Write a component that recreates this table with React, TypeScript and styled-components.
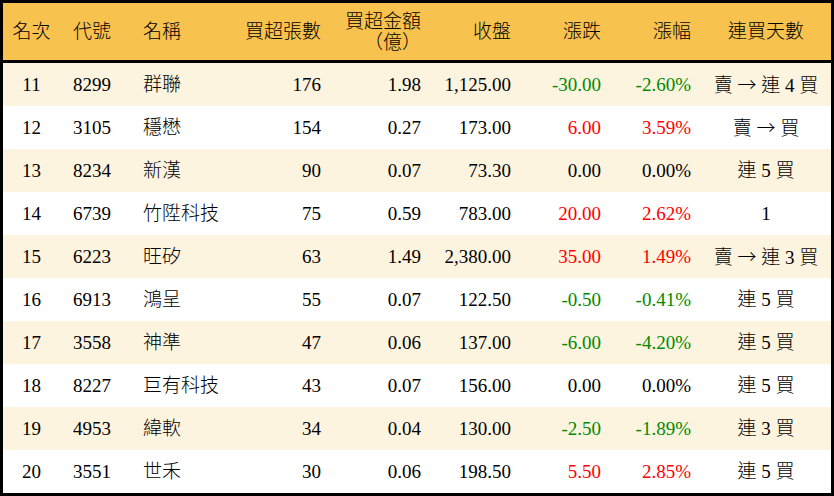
import React from 'react';
import styled, { createGlobalStyle } from 'styled-components';

const GlobalStyle = createGlobalStyle`
    html, body {
        margin: 0;
        padding: 0;
        background: #FFFFFF;
    }
`;

const COLUMNS = '57px 73px 98px 100px 100px 90px 90px 90px 130px';

const Table = styled.div`
    width: 834px;
    height: 496px;
    box-sizing: border-box;
    border: 3px solid #000000;
    font-family: "Liberation Serif", "Noto Sans CJK TC", serif;
    font-size: 19px;
    font-weight: 300;
    color: #000000;
    display: flex;
    flex-direction: column;
`;

const HeaderRow = styled.div`
    display: grid;
    grid-template-columns: ${COLUMNS};
    height: 57px;
    background: #F8C24F;
    border-bottom: 3px solid #000000;
`;

const Row = styled.div<{ $striped: boolean }>`
    display: grid;
    grid-template-columns: ${COLUMNS};
    height: 43px;
    background: ${props => (props.$striped ? '#FDF4E0' : '#FFFFFF')};
`;

type Align = 'left' | 'right' | 'center';

const Cell = styled.div<{ $align: Align; $color?: string }>`
    display: flex;
    flex-direction: column;
    justify-content: center;
    align-items: ${props =>
        props.$align === 'left' ? 'flex-start' : props.$align === 'right' ? 'flex-end' : 'center'};
    text-align: ${props => props.$align};
    padding: ${props =>
        props.$align === 'left' ? '0 0 0 10px' : props.$align === 'right' ? '0 10px 0 0' : '0'};
    color: ${props => props.$color || '#000000'};
    white-space: nowrap;
    line-height: 21px;
`;

const CodeCell = styled(Cell)`
    padding-left: 13px;
`;

const HeadText = styled.span`
    display: block;
`;

const Arrow = styled.span`
    font-family: "Noto Sans CJK TC", sans-serif;
    font-weight: 300;
`;

const columns: { label: string[]; align: Align }[] = [
    { label: ['名次'], align: 'center' },
    { label: ['代號'], align: 'left' },
    { label: ['名稱'], align: 'left' },
    { label: ['買超張數'], align: 'right' },
    { label: ['買超金額', '（億）'], align: 'right' },
    { label: ['收盤'], align: 'right' },
    { label: ['漲跌'], align: 'right' },
    { label: ['漲幅'], align: 'right' },
    { label: ['連買天數'], align: 'center' },
];

type Stock = {
    rank: number;
    code: string;
    name: string;
    lots: number;
    amount: string;
    close: string;
    change: string;
    pct: string;
    streak: string;
};

const rows: Stock[] = [
    { rank: 11, code: '8299', name: '群聯', lots: 176, amount: '1.98', close: '1,125.00', change: '-30.00', pct: '-2.60%', streak: '賣 → 連 4 買' },
    { rank: 12, code: '3105', name: '穩懋', lots: 154, amount: '0.27', close: '173.00', change: '6.00', pct: '3.59%', streak: '賣 → 買' },
    { rank: 13, code: '8234', name: '新漢', lots: 90, amount: '0.07', close: '73.30', change: '0.00', pct: '0.00%', streak: '連 5 買' },
    { rank: 14, code: '6739', name: '竹陞科技', lots: 75, amount: '0.59', close: '783.00', change: '20.00', pct: '2.62%', streak: '1' },
    { rank: 15, code: '6223', name: '旺矽', lots: 63, amount: '1.49', close: '2,380.00', change: '35.00', pct: '1.49%', streak: '賣 → 連 3 買' },
    { rank: 16, code: '6913', name: '鴻呈', lots: 55, amount: '0.07', close: '122.50', change: '-0.50', pct: '-0.41%', streak: '連 5 買' },
    { rank: 17, code: '3558', name: '神準', lots: 47, amount: '0.06', close: '137.00', change: '-6.00', pct: '-4.20%', streak: '連 5 買' },
    { rank: 18, code: '8227', name: '巨有科技', lots: 43, amount: '0.07', close: '156.00', change: '0.00', pct: '0.00%', streak: '連 5 買' },
    { rank: 19, code: '4953', name: '緯軟', lots: 34, amount: '0.04', close: '130.00', change: '-2.50', pct: '-1.89%', streak: '連 3 買' },
    { rank: 20, code: '3551', name: '世禾', lots: 30, amount: '0.06', close: '198.50', change: '5.50', pct: '2.85%', streak: '連 5 買' },
];

const changeColor = (value: string): string => {
    const n = parseFloat(value);
    if (n > 0) return '#FF0000';
    if (n < 0) return '#008A00';
    return '#000000';
};

// the arrow in the streak text is drawn from the CJK font, like the reference
const renderStreak = (text: string) =>
    text.split('→').map((part, i, all) => (
        <React.Fragment key={i}>
            {part}
            {i < all.length - 1 && <Arrow>→</Arrow>}
        </React.Fragment>
    ));

const App: React.FC = (): React.ReactElement => {
    return (
        <>
            <GlobalStyle />
            <Table>
                <HeaderRow>
                    {columns.map((col, i) =>
                        i === 1 ? (
                            <CodeCell key={i} $align={col.align}>
                                {col.label.map(l => <HeadText key={l}>{l}</HeadText>)}
                            </CodeCell>
                        ) : (
                            <Cell key={i} $align={col.align}>
                                {col.label.map(l => <HeadText key={l}>{l}</HeadText>)}
                            </Cell>
                        )
                    )}
                </HeaderRow>
                {rows.map((r, i) => (
                    <Row key={r.rank} $striped={i % 2 === 0}>
                        <Cell $align="center">{r.rank}</Cell>
                        <CodeCell $align="left">{r.code}</CodeCell>
                        <Cell $align="left">{r.name}</Cell>
                        <Cell $align="right">{r.lots}</Cell>
                        <Cell $align="right">{r.amount}</Cell>
                        <Cell $align="right">{r.close}</Cell>
                        <Cell $align="right" $color={changeColor(r.change)}>{r.change}</Cell>
                        <Cell $align="right" $color={changeColor(r.change)}>{r.pct}</Cell>
                        <Cell $align="center"><span>{renderStreak(r.streak)}</span></Cell>
                    </Row>
                ))}
            </Table>
        </>
    );
};

export default App;
